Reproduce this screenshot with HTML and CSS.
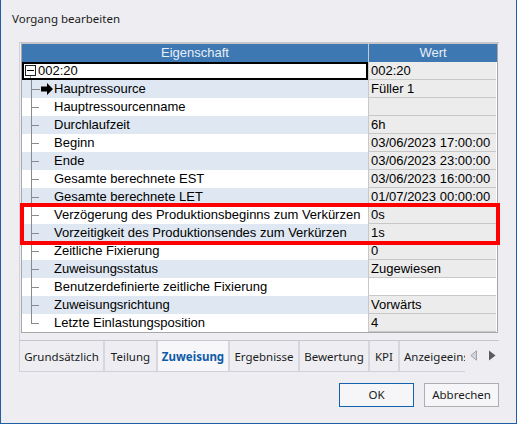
FILE: index.html
```html
<!DOCTYPE html>
<html lang="de">
<head>
<meta charset="utf-8">
<title>Vorgang bearbeiten</title>
<link rel="stylesheet" href="styles.css">
</head>
<body>
<div class="window">
  <div class="title">Vorgang bearbeiten</div>
  <div class="panel">
    <div class="grid">
      <div class="head">
        <div class="hprop">Eigenschaft</div>
        <div class="hval">Wert</div>
      </div>
      <div class="row">
        <div class="prop sel"><span class="box"></span><span class="rootname">002:20</span></div>
        <div class="val">002:20</div>
      </div>
      <div class="row alt">
        <div class="prop arrowrow"><svg class="arrow" width="12" height="12" viewBox="0 0 12 12"><path d="M0 3.5H6V0L12 6L6 12V8.5H0Z" fill="#000"/></svg>Hauptressource</div>
        <div class="val">Füller 1</div>
      </div>
      <div class="row">
        <div class="prop">Hauptressourcenname</div>
        <div class="val"></div>
      </div>
      <div class="row alt">
        <div class="prop">Durchlaufzeit</div>
        <div class="val">6h</div>
      </div>
      <div class="row">
        <div class="prop">Beginn</div>
        <div class="val">03/06/2023 17:00:00</div>
      </div>
      <div class="row alt">
        <div class="prop">Ende</div>
        <div class="val">03/06/2023 23:00:00</div>
      </div>
      <div class="row">
        <div class="prop">Gesamte berechnete EST</div>
        <div class="val">03/06/2023 16:00:00</div>
      </div>
      <div class="row alt">
        <div class="prop">Gesamte berechnete LET</div>
        <div class="val">01/07/2023 00:00:00</div>
      </div>
      <div class="row">
        <div class="prop">Verzögerung des Produktionsbeginns zum Verkürzen</div>
        <div class="val">0s</div>
      </div>
      <div class="row alt">
        <div class="prop">Vorzeitigkeit des Produktionsendes zum Verkürzen</div>
        <div class="val">1s</div>
      </div>
      <div class="row">
        <div class="prop">Zeitliche Fixierung</div>
        <div class="val">0</div>
      </div>
      <div class="row alt">
        <div class="prop">Zuweisungsstatus</div>
        <div class="val">Zugewiesen</div>
      </div>
      <div class="row">
        <div class="prop">Benutzerdefinierte zeitliche Fixierung</div>
        <div class="val white"></div>
      </div>
      <div class="row alt">
        <div class="prop">Zuweisungsrichtung</div>
        <div class="val">Vorwärts</div>
      </div>
      <div class="row">
        <div class="prop last">Letzte Einlastungsposition</div>
        <div class="val">4</div>
      </div>
      <div class="highlight"></div>
    </div>
  </div>
  <div class="tabstrip">
    <div class="tabs">
      <div class="tab t1">Grundsätzlich</div>
      <div class="tab t2">Teilung</div>
      <div class="tab t3 active">Zuweisung</div>
      <div class="tab t4">Ergebnisse</div>
      <div class="tab t5">Bewertung</div>
      <div class="tab t6">KPI</div>
      <div class="tab t7">Anzeigeeinstellungen</div>
    </div>
    <div class="scroll">
      <svg width="8" height="11" viewBox="0 0 8 11"><path d="M6.5 0.8V10.2L0.8 5.5Z" fill="#d4d4da" stroke="#a2a2a8" stroke-width="1"/></svg>
      <svg width="8" height="11" viewBox="0 0 8 11"><path d="M1 0.5V10.5L7.5 5.5Z" fill="#5a5a60"/></svg>
    </div>
  </div>
  <div class="buttons">
    <div class="btn primary">OK</div>
    <div class="btn">Abbrechen</div>
  </div>
</div>
</body>
</html>
```

FILE: styles.css
```css
html, body {
  margin: 0;
  padding: 0;
}
body {
  width: 517px;
  height: 424px;
  overflow: hidden;
  background: #f0f0f0;
}
.window {
  box-sizing: border-box;
  width: 517px;
  height: 424px;
  background: #eeeef2;
  border-left: 1px solid #1f5fa3;
  border-right: 1px solid #1f5fa3;
  border-bottom: 1px solid #1f5fa3;
  padding-top: 11px;
  font-family: "Noto Sans", "Open Sans", sans-serif;
  font-size: 11.5px;
  color: #1b1b1b;
}
.title {
  height: 16px;
  line-height: 16px;
  padding-left: 11px;
}
.panel {
  box-sizing: border-box;
  margin-top: 15px;
  margin-left: 18px;
  width: 480px;
  height: 299px;
  border-top: 1px solid #c6c6cc;
  border-left: 1px solid #d2d2d8;
  border-bottom: 1px solid #c6c6cc;
  padding: 0 0 0 1px;
}
.grid {
  position: relative;
  box-sizing: border-box;
  width: 477px;
  border: 1px solid #a8a8a8;
  border-top: 1px solid #c8c8c8;
  font-family: "Liberation Sans", Arial, sans-serif;
  font-size: 13px;
  color: #000;
  background: #fff;
}
.head {
  display: flex;
  height: 18px;
  background: #3d78b3;
  color: #e8eef6;
  line-height: 18px;
}
.hprop {
  width: 346px;
  text-align: center;
  border-right: 1px solid #c4cbd3;
}
.hval {
  width: 128px;
  text-align: center;
}
.row {
  display: flex;
  height: 18px;
}
.prop {
  box-sizing: border-box;
  width: 346px;
  height: 18px;
  line-height: 18px;
  padding-left: 32px;
  white-space: nowrap;
  overflow: hidden;
  background:
    linear-gradient(#8a8a8a, #8a8a8a) 9px 0 / 1px 100% no-repeat,
    linear-gradient(#8a8a8a, #8a8a8a) 9px 9px / 8px 1px no-repeat,
    #ffffff;
}
.row.alt .prop {
  background:
    linear-gradient(#8a8a8a, #8a8a8a) 9px 0 / 1px 100% no-repeat,
    linear-gradient(#8a8a8a, #8a8a8a) 9px 9px / 8px 1px no-repeat,
    #dfe8f2;
}
.prop.last {
  background:
    linear-gradient(#8a8a8a, #8a8a8a) 9px 0 / 1px 10px no-repeat,
    linear-gradient(#8a8a8a, #8a8a8a) 9px 9px / 8px 1px no-repeat,
    #ffffff;
}
.row.alt .prop.arrowrow {
  display: flex;
  align-items: center;
  padding-left: 19px;
  background:
    linear-gradient(#8a8a8a, #8a8a8a) 9px 0 / 1px 100% no-repeat,
    linear-gradient(#8a8a8a, #8a8a8a) 9px 9px / 9px 1px no-repeat,
    #dfe8f2;
}
.arrow {
  margin-right: 1px;
  flex: none;
}
.prop.sel {
  display: flex;
  align-items: center;
  padding-left: 1px;
  border: 2px solid #000;
  line-height: 14px;
  background:
    linear-gradient(#8a8a8a, #8a8a8a) 6px 12px / 1px 3px no-repeat,
    #ffffff;
}
.box {
  box-sizing: border-box;
  width: 11px;
  height: 11px;
  border: 1px solid #222;
  margin-top: -1px;
  background: linear-gradient(#000, #000) 1px 4px / 7px 1px no-repeat, #fff;
  flex: none;
}
.rootname {
  margin-left: 2px;
}
.val {
  box-sizing: border-box;
  width: 128px;
  height: 18px;
  line-height: 17px;
  padding-left: 2px;
  background: #ececec;
  border-left: 1px solid #c8c8c8;
  border-bottom: 1px solid #c8c8c8;
  white-space: nowrap;
  overflow: hidden;
}
.val.white {
  background: #ffffff;
}
.highlight {
  position: absolute;
  left: -2px;
  top: 159px;
  width: 480px;
  height: 42px;
  box-sizing: border-box;
  border: 4px solid #ff0000;
  pointer-events: none;
}
.tabstrip {
  display: flex;
  margin-left: 18px;
  height: 31px;
}
.tabs {
  display: flex;
  width: 446px;
  overflow: hidden;
  border-bottom: 1px solid #cfd0d8;
  box-sizing: border-box;
  height: 31px;
}
.tab {
  box-sizing: border-box;
  flex: none;
  height: 30px;
  line-height: 31px;
  text-align: center;
  border-left: 2px solid #d6d7de;
  white-space: nowrap;
}
.tab.active {
  background: #f7f7f9;
  color: #0f5ba8;
  font-weight: bold;
}
.t1 { width: 84px; border-left-width: 1px; }
.t2 { width: 53px; }
.t3 { width: 72px; }
.t4 { width: 70px; }
.t5 { width: 70px; }
.t6 { width: 30px; }
.t7 { width: 120px; text-align: left; padding-left: 4px; }
.scroll {
  display: flex;
  align-items: center;
  gap: 10px;
  padding-left: 5px;
  padding-bottom: 2px;
}
.buttons {
  display: flex;
  justify-content: flex-end;
  gap: 10px;
  padding-right: 17px;
  margin-top: 11px;
}
.btn {
  box-sizing: border-box;
  width: 75px;
  height: 24px;
  line-height: 22px;
  text-align: center;
  background: #f6f6f8;
  border: 1px solid #adadb2;
}
.btn.primary {
  border: 1px solid #1262ad;
}
```
